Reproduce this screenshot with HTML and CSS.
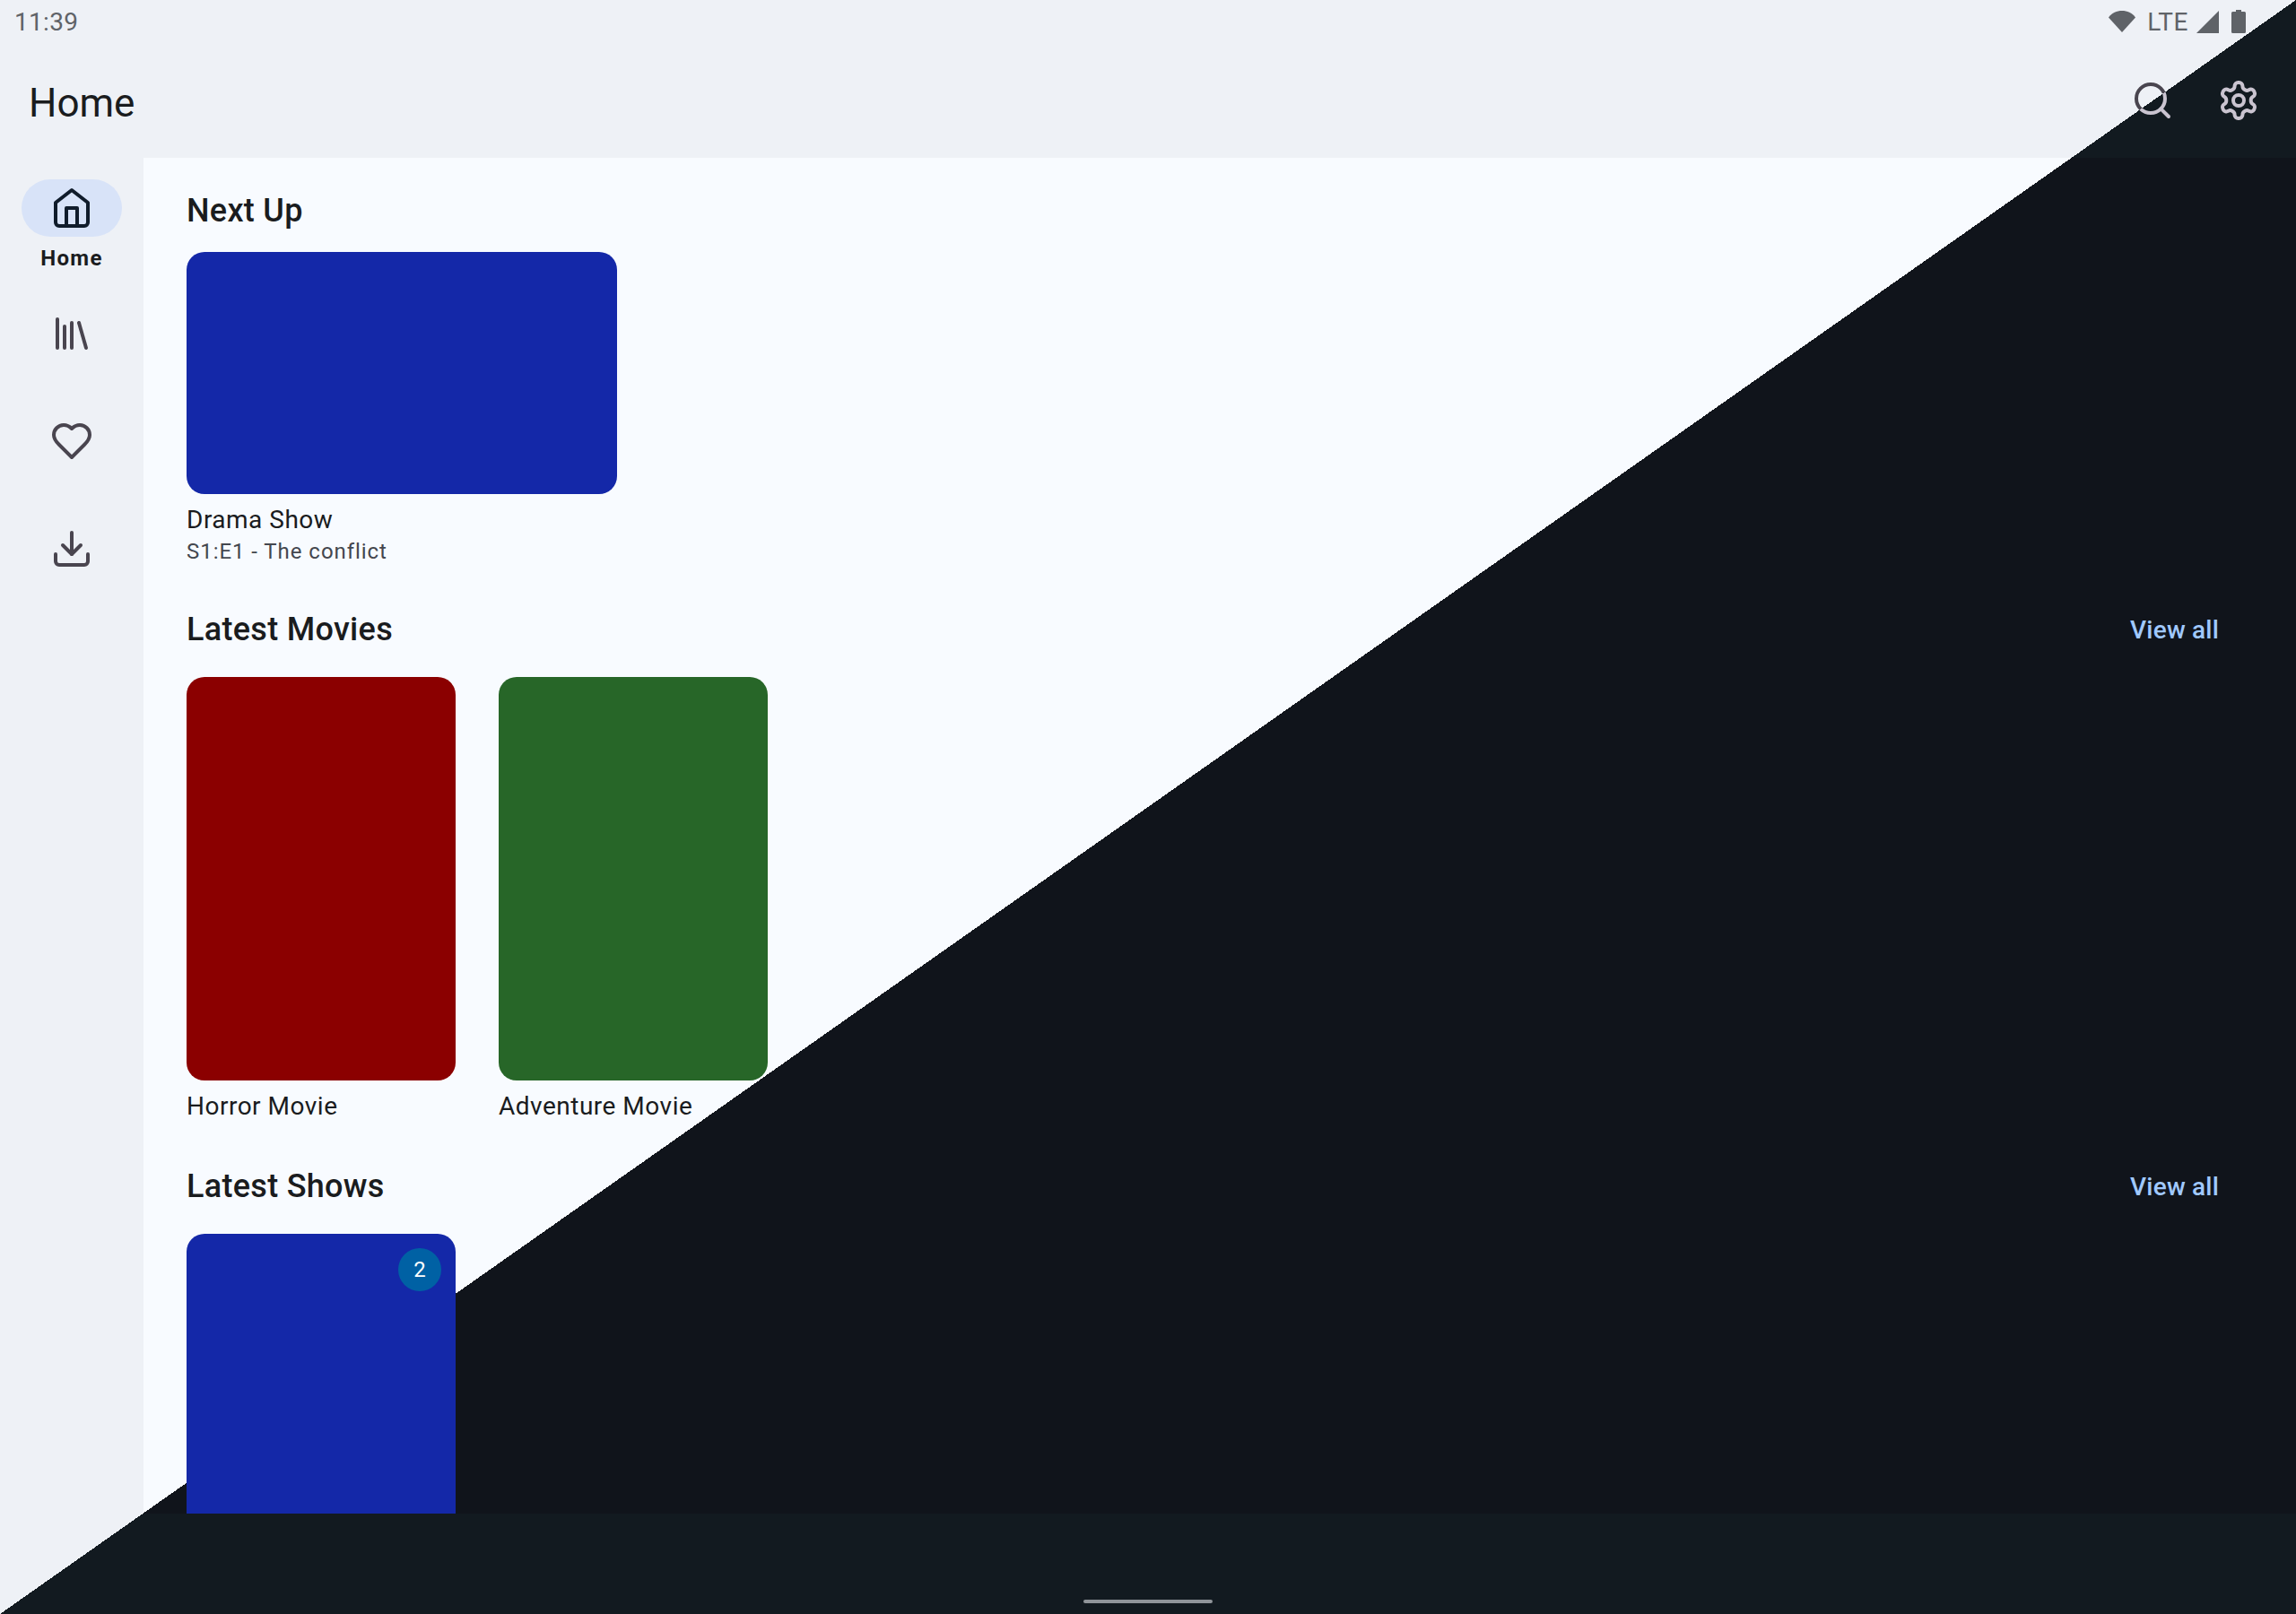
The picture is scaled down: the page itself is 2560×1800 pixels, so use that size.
FILE: index.html
```html
<!DOCTYPE html>
<html lang="en">
<head>
    <meta charset="UTF-8">
    <meta name="viewport" content="width=device-width, initial-scale=1.0">
    <title>Home</title>
    <link rel="stylesheet" href="styles.css">
</head>
<body>
    <div class="status-bar">
        <span class="status-time">11:39</span>
        <div class="status-icons">
            <svg class="wifi-icon" viewBox="0 0 30 26"><path d="M0 8.5C4 3 9 1 15 1s11 2 15 7.500L15 25z"/></svg>
            <span class="status-lte">LTE</span>
            <svg class="signal-icon" viewBox="0 0 25 25"><path d="M25 0v25H0z"/></svg>
            <svg class="battery-icon" viewBox="0 0 16 26"><path d="M5 0h6v2h3.500q1.500 0 1.500 1.500v21q0 1.500-1.500 1.500h-13Q0 26 0 24.500v-21Q0 2 1.500 2H5z"/></svg>
        </div>
    </div>

    <header class="top-bar">
        <h1 class="top-title">Home</h1>
        <div class="top-actions">
            <button class="icon-button">
                <svg class="icon" viewBox="0 0 24 24">
                    <defs>
                        <linearGradient id="split" gradientUnits="userSpaceOnUse" x1="12" y1="12.25" x2="12.7" y2="13.25">
                            <stop offset="0" stop-color="#49454f"/>
                            <stop offset="0" stop-color="#cac4d0"/>
                        </linearGradient>
                    </defs>
                    <g stroke="url(#split)">
                        <circle cx="11" cy="11" r="8"/>
                        <path d="M21 21l-4.350-4.350"/>
                    </g>
                </svg>
            </button>
            <button class="icon-button icon-button-dark">
                <svg class="icon" viewBox="0 0 24 24">
                    <path d="M12.220 2h-.44a2 2 0 0 0-2 2v.18a2 2 0 0 1-1 1.730l-.43.25a2 2 0 0 1-2 0l-.15-.08a2 2 0 0 0-2.730.73l-.22.38a2 2 0 0 0 .73 2.730l.15.1a2 2 0 0 1 1 1.720v.51a2 2 0 0 1-1 1.740l-.15.09a2 2 0 0 0-.73 2.730l.22.38a2 2 0 0 0 2.730.73l.15-.08a2 2 0 0 1 2 0l.43.25a2 2 0 0 1 1 1.730V20a2 2 0 0 0 2 2h.44a2 2 0 0 0 2-2v-.18a2 2 0 0 1 1-1.730l.43-.25a2 2 0 0 1 2 0l.15.08a2 2 0 0 0 2.730-.73l.22-.39a2 2 0 0 0-.73-2.730l-.15-.08a2 2 0 0 1-1-1.740v-.5a2 2 0 0 1 1-1.740l.15-.09a2 2 0 0 0 .73-2.730l-.22-.38a2 2 0 0 0-2.730-.73l-.15.08a2 2 0 0 1-2 0l-.43-.25a2 2 0 0 1-1-1.730V4a2 2 0 0 0-2-2z"/>
                    <circle cx="12" cy="12" r="3"/>
                </svg>
            </button>
        </div>
    </header>

    <div class="middle">
        <nav class="rail">
            <a class="rail-item rail-item-active">
                <span class="rail-pill">
                    <svg class="icon" viewBox="0 0 24 24">
                        <path d="M3 9l9-7 9 7v11a2 2 0 0 1-2 2H5a2 2 0 0 1-2-2z"/>
                        <path d="M9 22V12h6v10"/>
                    </svg>
                </span>
                <span class="rail-label">Home</span>
            </a>
            <a class="rail-item">
                <svg class="icon" viewBox="0 0 24 24">
                    <path d="M16 6l4 14"/><path d="M12 6v14"/><path d="M8 8v12"/><path d="M4 4v16"/>
                </svg>
            </a>
            <a class="rail-item">
                <svg class="icon" viewBox="0 0 24 24">
                    <path d="M19 14c1.490-1.460 3-3.210 3-5.500A5.500 5.500 0 0 0 16.500 3c-1.760 0-3 .5-4.500 2-1.500-1.500-2.740-2-4.500-2A5.500 5.500 0 0 0 2 8.500c0 2.300 1.500 4.050 3 5.500l7 7z"/>
                </svg>
            </a>
            <a class="rail-item">
                <svg class="icon" viewBox="0 0 24 24">
                    <path d="M21 15v4a2 2 0 0 1-2 2H5a2 2 0 0 1-2-2v-4"/>
                    <path d="M7 10l5 5 5-5"/>
                    <path d="M12 15V3"/>
                </svg>
            </a>
        </nav>

        <main class="content">
            <section class="row">
                <div class="row-head">
                    <h2 class="row-title">Next Up</h2>
                </div>
                <div class="card-list">
                    <div class="card">
                        <div class="poster poster-wide poster-blue"></div>
                        <div class="card-title">Drama Show</div>
                        <div class="card-sub">S1:E1 - The conflict</div>
                    </div>
                </div>
            </section>

            <section class="row">
                <div class="row-head">
                    <h2 class="row-title">Latest Movies</h2>
                    <a class="view-all">View all</a>
                </div>
                <div class="card-list">
                    <div class="card">
                        <div class="poster poster-red"></div>
                        <div class="card-title">Horror Movie</div>
                    </div>
                    <div class="card">
                        <div class="poster poster-green"></div>
                        <div class="card-title">Adventure Movie</div>
                    </div>
                </div>
            </section>

            <section class="row">
                <div class="row-head">
                    <h2 class="row-title">Latest Shows</h2>
                    <a class="view-all">View all</a>
                </div>
                <div class="card-list">
                    <div class="card">
                        <div class="poster poster-blue">
                            <span class="badge">2</span>
                        </div>
                    </div>
                </div>
            </section>
        </main>
    </div>

    <div class="gesture-bar">
        <div class="gesture-handle"></div>
    </div>
</body>
</html>
```

FILE: styles.css
```css
/* General Styles */
body {
    font-family: Roboto, "Liberation Sans", sans-serif;
    margin: 0;
    height: 100vh;
    overflow: hidden;
    display: flex;
    flex-direction: column;
    color: #1a1c1e;
    /* split screen: the diagonal runs corner to corner of the window */
    background: linear-gradient(to bottom right, #eef1f6 50%, #121a20 50%) fixed;
}

/* Status bar */
.status-bar {
    height: 48px;
    flex: none;
    display: flex;
    justify-content: space-between;
    align-items: center;
    padding: 0 56px 0 16px;
    color: #5f6368;
    font-size: 28px;
}

.status-time {
    margin-top: 1px;
    letter-spacing: 0.3px;
}

.status-icons {
    display: flex;
    align-items: center;
}

.status-icons svg {
    fill: #5f6368;
    display: block;
}

.wifi-icon {
    width: 30px;
    height: 26px;
}

.status-lte {
    margin: 0 9px 0 13px;
    letter-spacing: 0.6px;
}

.signal-icon {
    width: 25px;
    height: 25px;
}

.battery-icon {
    width: 16px;
    height: 26px;
    margin-left: 14px;
}

/* Top bar */
.top-bar {
    height: 128px;
    flex: none;
    display: flex;
    justify-content: space-between;
    align-items: center;
    padding: 0 16px 0 32px;
}

.top-title {
    margin: 5px 0 0;
    font-size: 44px;
    font-weight: 400;
}

.top-actions {
    display: flex;
}

.icon-button {
    width: 96px;
    height: 96px;
    padding: 0;
    border: none;
    background: none;
    display: flex;
    justify-content: center;
    align-items: center;
}

.icon-button-dark .icon {
    stroke: #cac4d0;
}

.icon {
    width: 48px;
    height: 48px;
    display: block;
    fill: none;
    stroke: #49454f;
    stroke-width: 2;
    stroke-linecap: round;
    stroke-linejoin: round;
}

/* Middle part */
.middle {
    flex: 1;
    min-height: 0;
    display: flex;
}

/* Navigation rail */
.rail {
    width: 160px;
    flex: none;
    padding-top: 16px;
}

.rail-item {
    height: 120px;
    display: flex;
    flex-direction: column;
    justify-content: center;
    align-items: center;
}

.rail-pill {
    width: 112px;
    height: 64px;
    border-radius: 32px;
    background-color: #d8e3f8;
    display: flex;
    justify-content: center;
    align-items: center;
}

.rail-pill .icon {
    stroke: #101c2b;
}

.rail-label {
    margin-top: 8px;
    font-size: 24px;
    line-height: 32px;
    font-weight: 700;
    letter-spacing: 1.3px;
}

/* Main content */
.content {
    flex: 1;
    min-width: 0;
    overflow: hidden;
    padding: 29px 86px 0 48px;
    background: linear-gradient(to bottom right, #f8fbff 50%, #10141b 50%) fixed;
}

.row {
    margin-bottom: 32px;
}

.row-head {
    min-height: 60px;
    margin-bottom: 16px;
    display: flex;
    justify-content: space-between;
    align-items: center;
}

.row-title {
    margin: 0;
    font-size: 36px;
    font-weight: 500;
    letter-spacing: 0.3px;
}

.view-all {
    padding: 20px 0 18px;
    font-size: 28px;
    line-height: 36px;
    font-weight: 500;
    letter-spacing: 0.2px;
    color: #a0c9ff;
}

.card-list {
    display: flex;
    gap: 48px;
}

.card {
    width: 300px;
}

.poster {
    position: relative;
    height: 450px;
    border-radius: 20px;
}

.poster-wide {
    width: 480px;
    height: 270px;
}

.poster-blue {
    background-color: #1428a8;
}

.poster-red {
    background-color: #8b0000;
}

.poster-green {
    background-color: #276628;
}

.card-title {
    margin-top: 9px;
    font-size: 28px;
    line-height: 40px;
    letter-spacing: 0.5px;
    white-space: nowrap;
}

.card-sub {
    margin: -1px 0 2px;
    font-size: 24px;
    line-height: 32px;
    letter-spacing: 0.95px;
    color: #44474e;
    white-space: nowrap;
}

.badge {
    position: absolute;
    top: 16px;
    right: 16px;
    width: 48px;
    height: 48px;
    border-radius: 50%;
    background-color: #0061a4;
    color: white;
    font-size: 24px;
    display: flex;
    justify-content: center;
    align-items: center;
}

/* Gesture bar */
.gesture-bar {
    height: 112px;
    flex: none;
    display: flex;
    justify-content: center;
    align-items: flex-end;
    padding-bottom: 12px;
    box-sizing: border-box;
}

.gesture-handle {
    width: 144px;
    height: 4px;
    border-radius: 2px;
    background-color: #8f9499;
}
```
